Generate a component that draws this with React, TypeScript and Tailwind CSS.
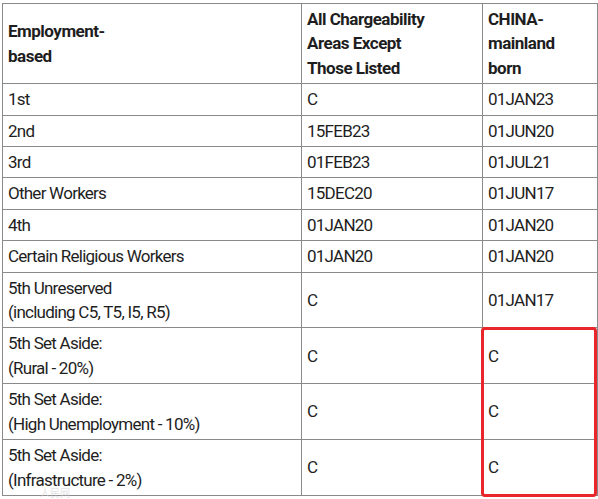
const rows: [string, string, string][] = [
  ["1st", "C", "01JAN23"],
  ["2nd", "15FEB23", "01JUN20"],
  ["3rd", "01FEB23", "01JUL21"],
  ["Other Workers", "15DEC20", "01JUN17"],
  ["4th", "01JAN20", "01JAN20"],
  ["Certain Religious Workers", "01JAN20", "01JAN20"],
  ["5th Unreserved\n(including C5, T5, I5, R5)", "C", "01JAN17"],
  ["5th Set Aside:\n(Rural - 20%)", "C", "C"],
  ["5th Set Aside:\n(High Unemployment - 10%)", "C", "C"],
  ["5th Set Aside:\n(Infrastructure - 2%)", "C", "C"],
];

function Cell({ text, head }: { text: string; head?: boolean }) {
  const Tag = head ? "th" : "td";
  return (
    <Tag
      className={`border border-[#8a8a8a] px-[5px] py-[3px] text-left align-middle whitespace-pre-line ${
        head ? "font-bold tracking-[-0.5px]" : "font-normal"
      }`}
    >
      {text}
    </Tag>
  );
}

export default function App() {
  return (
    <div className="relative w-[598px] h-[499px] bg-white overflow-hidden font-['Roboto',sans-serif] text-[17px] leading-[24.4px] tracking-[-0.75px] text-[#1e1e1e]">
      <table className="ml-[2px] mt-[3px] w-[595px] table-fixed border-collapse">
        <colgroup>
          <col className="w-[299px]" />
          <col className="w-[181px]" />
          <col className="w-[115px]" />
        </colgroup>
        <thead>
          <tr>
            <Cell head text={"Employment-\nbased"} />
            <Cell head text={"All Chargeability\nAreas Except\nThose Listed"} />
            <Cell head text={"CHINA-\nmainland\nborn"} />
          </tr>
        </thead>
        <tbody>
          {rows.map(([a, b, c]) => (
            <tr key={a}>
              <Cell text={a} />
              <Cell text={b} />
              <Cell text={c} />
            </tr>
          ))}
        </tbody>
      </table>

      {/* highlight box over the last three China cells */}
      <div className="absolute left-[481px] top-[327px] w-[116px] h-[170px] border-[3px] border-[#e8262b] rounded-[4px]" />

      {/* faint watermark */}
      <div className="absolute left-[40px] top-[487px] text-[10px] leading-[12px] tracking-normal text-[#d4d4d4] opacity-60 font-['Noto_Sans_CJK_SC',sans-serif]">
        人民网
      </div>
    </div>
  );
}
